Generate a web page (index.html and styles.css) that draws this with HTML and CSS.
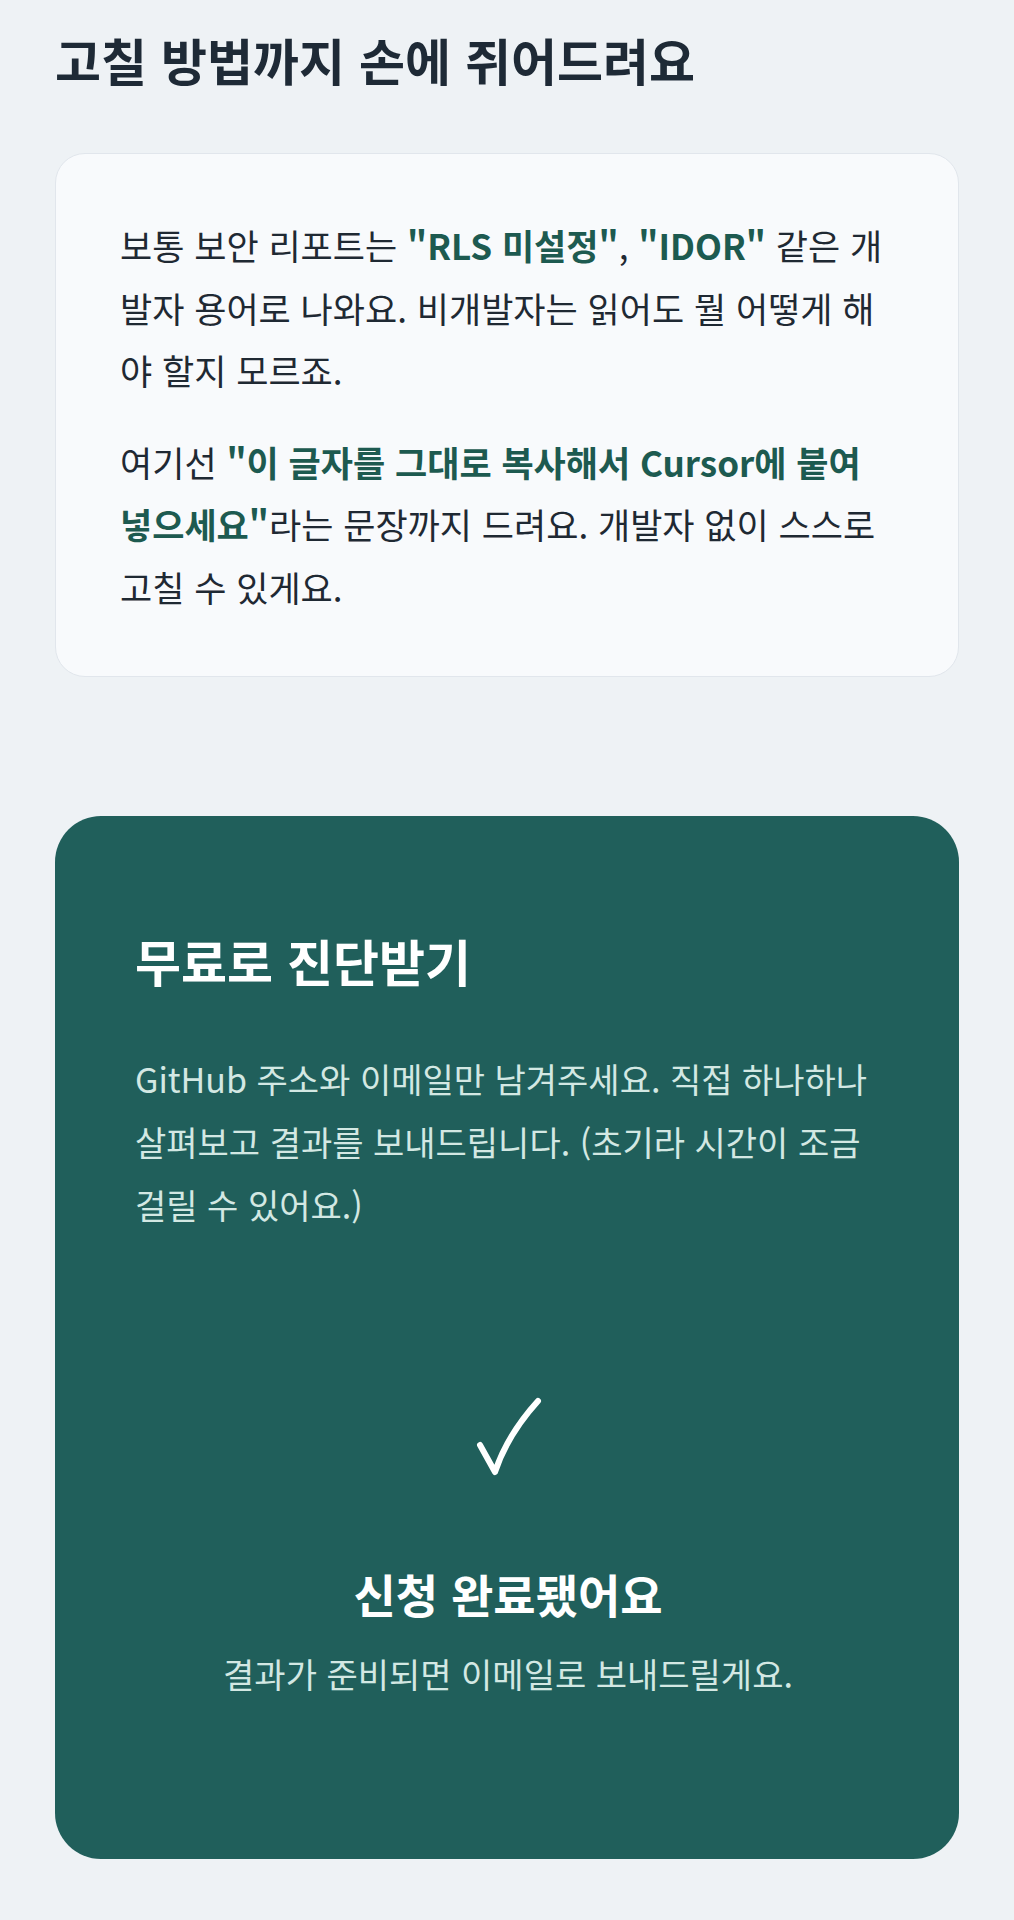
FILE: index.html
```html
<!DOCTYPE html>
<html lang="ko">
<head>
  <meta charset="utf-8">
  <title>보안 진단</title>
  <link rel="stylesheet" href="styles.css">
</head>
<body>
  <section class="section">
    <h2 class="section-title">고칠 방법까지 손에 쥐어드려요</h2>
    <div class="info-card">
      <p>보통 보안 리포트는 <strong>"RLS 미설정"</strong>, <strong>"IDOR"</strong> 같은 개발자 용어로 나와요. 비개발자는 읽어도 뭘 어떻게 해야 할지 모르죠.</p>
      <p>여기선 <strong>"이 글자를 그대로 복사해서 Cursor에 붙여넣으세요"</strong>라는 문장까지 드려요. 개발자 없이 스스로 고칠 수 있게요.</p>
    </div>
  </section>

  <section class="cta-card">
    <h2 class="cta-title">무료로 진단받기</h2>
    <p class="cta-desc">GitHub 주소와 이메일만 남겨주세요. 직접 하나하나 살펴보고 결과를 보내드립니다. (초기라 시간이 조금 걸릴 수 있어요.)</p>

    <div class="done">
      <svg class="done-icon" width="80" height="90" viewBox="0 0 80 90">
        <path d="M12 52 L27 79 C36 52 50 30 70 8" fill="none" stroke="#fff" stroke-width="6" stroke-linecap="round" stroke-linejoin="round"/>
      </svg>
      <h3 class="done-title">신청 완료됐어요</h3>
      <p class="done-text">결과가 준비되면 이메일로 보내드릴게요.</p>
    </div>
  </section>
</body>
</html>
```

FILE: styles.css
```css
body {
  margin: 0;
  padding: 27px 55px 60px;
  background-color: #eef2f5;
  font-family: "Noto Sans CJK KR", "Noto Sans", sans-serif;
  color: #1f2933;
}

.section-title {
  margin: 0;
  font-size: 50px;
  line-height: 65px;
  font-weight: 700;
  color: #1e2a36;
}

.info-card {
  margin-top: 61px;
  padding: 60px 66px 58px 64px;
  background-color: #f8fafc;
  border: 1.5px solid #e1e6ec;
  border-radius: 30px;
}

.info-card p {
  margin: 0;
  font-size: 35px;
  line-height: 62.5px;
  color: #1f2933;
}

.info-card p + p {
  margin-top: 29px;
}

.info-card strong {
  color: #1d5a50;
  font-weight: 700;
}

.cta-card {
  margin-top: 139px;
  padding: 114px 78px 162px 80px;
  background-color: #205f5b;
  border-radius: 46px;
  color: #fff;
}

.cta-title {
  margin: 0;
  font-size: 50px;
  line-height: 60px;
  font-weight: 700;
}

.cta-desc {
  margin: 57px 0 0;
  font-size: 34px;
  line-height: 63px;
  color: #d3e8e3;
}

.done {
  margin-top: 157px;
  display: flex;
  flex-direction: column;
  align-items: center;
  text-align: center;
}

.done-icon {
  display: block;
}

.done-title {
  margin: 82px 0 0;
  font-size: 46px;
  line-height: 56px;
  font-weight: 700;
}

.done-text {
  margin: 30px 0 0;
  font-size: 34px;
  line-height: 46px;
  color: #d3e8e3;
}
```
